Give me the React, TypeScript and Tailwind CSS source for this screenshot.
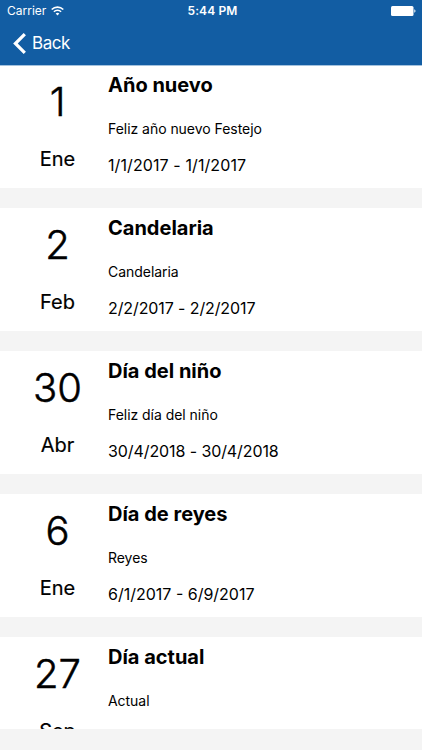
import React from "react";

type Holiday = {
  day: string;
  month: string;
  title: string;
  desc: string;
  dates: string;
  tracking: string;
};

const holidays: Holiday[] = [
  { day: "1", month: "Ene", title: "Año nuevo", desc: "Feliz año nuevo Festejo", dates: "1/1/2017 - 1/1/2017", tracking: "tracking-[0.1px]" },
  { day: "2", month: "Feb", title: "Candelaria", desc: "Candelaria", dates: "2/2/2017 - 2/2/2017", tracking: "tracking-[-0.1px]" },
  { day: "30", month: "Abr", title: "Día del niño", desc: "Feliz día del niño", dates: "30/4/2018 - 30/4/2018", tracking: "tracking-[-0.09px]" },
  { day: "6", month: "Ene", title: "Día de reyes", desc: "Reyes", dates: "6/1/2017 - 6/9/2017", tracking: "tracking-normal" },
  { day: "27", month: "Sep", title: "Día actual", desc: "Actual", dates: "27/9/2017 - 27/9/2017", tracking: "tracking-normal" },
];

function Row({ day, month, title, desc, dates, tracking }: Holiday) {
  return (
    <article className="flex h-[123px] shrink-0 bg-white text-black">
      <div className="flex w-[108px] shrink-0 flex-col items-center pl-[7px]">
        <div className="mt-[12px] h-[50px] text-[40px] leading-[50px] font-light [-webkit-text-stroke:0.5px_black]">{day}</div>
        <div className="mt-[20px] h-[24px] text-[20px] leading-[24px] [-webkit-text-stroke:0.2px_black]">{month}</div>
      </div>
      <div className="whitespace-nowrap">
        <h2 className="mt-[7px] h-[26px] text-[20px] leading-[26px] font-bold">{title}</h2>
        <p className="mt-[22px] h-[18px] text-[14px] leading-[18px] tracking-[-0.04px]">{desc}</p>
        <p className={`mt-[16px] h-[22px] text-[16px] leading-[22px] ${tracking}`}>{dates}</p>
      </div>
    </article>
  );
}

export default function App() {
  return (
    <div className="flex h-[750px] w-[422px] flex-col overflow-hidden bg-[#f4f4f4] font-['Inter',sans-serif]">
      <header className="relative z-10 h-[66px] shrink-0 border-b border-[#a3c2de] bg-[#125da3] text-white">
        <div className="grid h-[22px] grid-cols-3 items-center pr-[6px] pl-[7px] text-[12px]">
          <div className="flex items-center gap-[5px]">
            <span>Carrier</span>
            <svg width="13" height="10" viewBox="0 0 13 10" fill="none" stroke="currentColor" strokeWidth="1.6">
              <path d="M.7 3.5a8.2 8.2 0 0 1 11.6 0M2.9 5.7a5.1 5.1 0 0 1 7.2 0" />
              <path d="M6.5 9.5 4.7 7.6a2.6 2.6 0 0 1 3.6 0Z" fill="currentColor" stroke="none" />
            </svg>
          </div>
          <span className="pl-[2px] text-center font-semibold tracking-[0.12px] whitespace-nowrap">5:44 PM</span>
          <svg className="justify-self-end" width="26" height="10" viewBox="0 0 26 10" fill="currentColor">
            <rect x="1" width="22.5" height="10" rx="1.5" />
            <path d="M24.3 3.3c1.6.5 1.6 2.9 0 3.4Z" />
          </svg>
        </div>
        <div className="flex h-[43px] items-center gap-[6px] pl-[13px]">
          <svg width="13" height="21" viewBox="0 0 13 21" fill="none" stroke="currentColor" strokeWidth="3.2">
            <path d="M11.8 1.2 2.4 10.5l9.4 9.3" />
          </svg>
          <span className="text-[17px] tracking-[-0.45px]">Back</span>
        </div>
      </header>
      <main className="-mt-px flex h-[664px] shrink-0 flex-col gap-[20px] overflow-hidden">
        {holidays.map((h) => (
          <Row key={h.title} {...h} />
        ))}
      </main>
    </div>
  );
}
